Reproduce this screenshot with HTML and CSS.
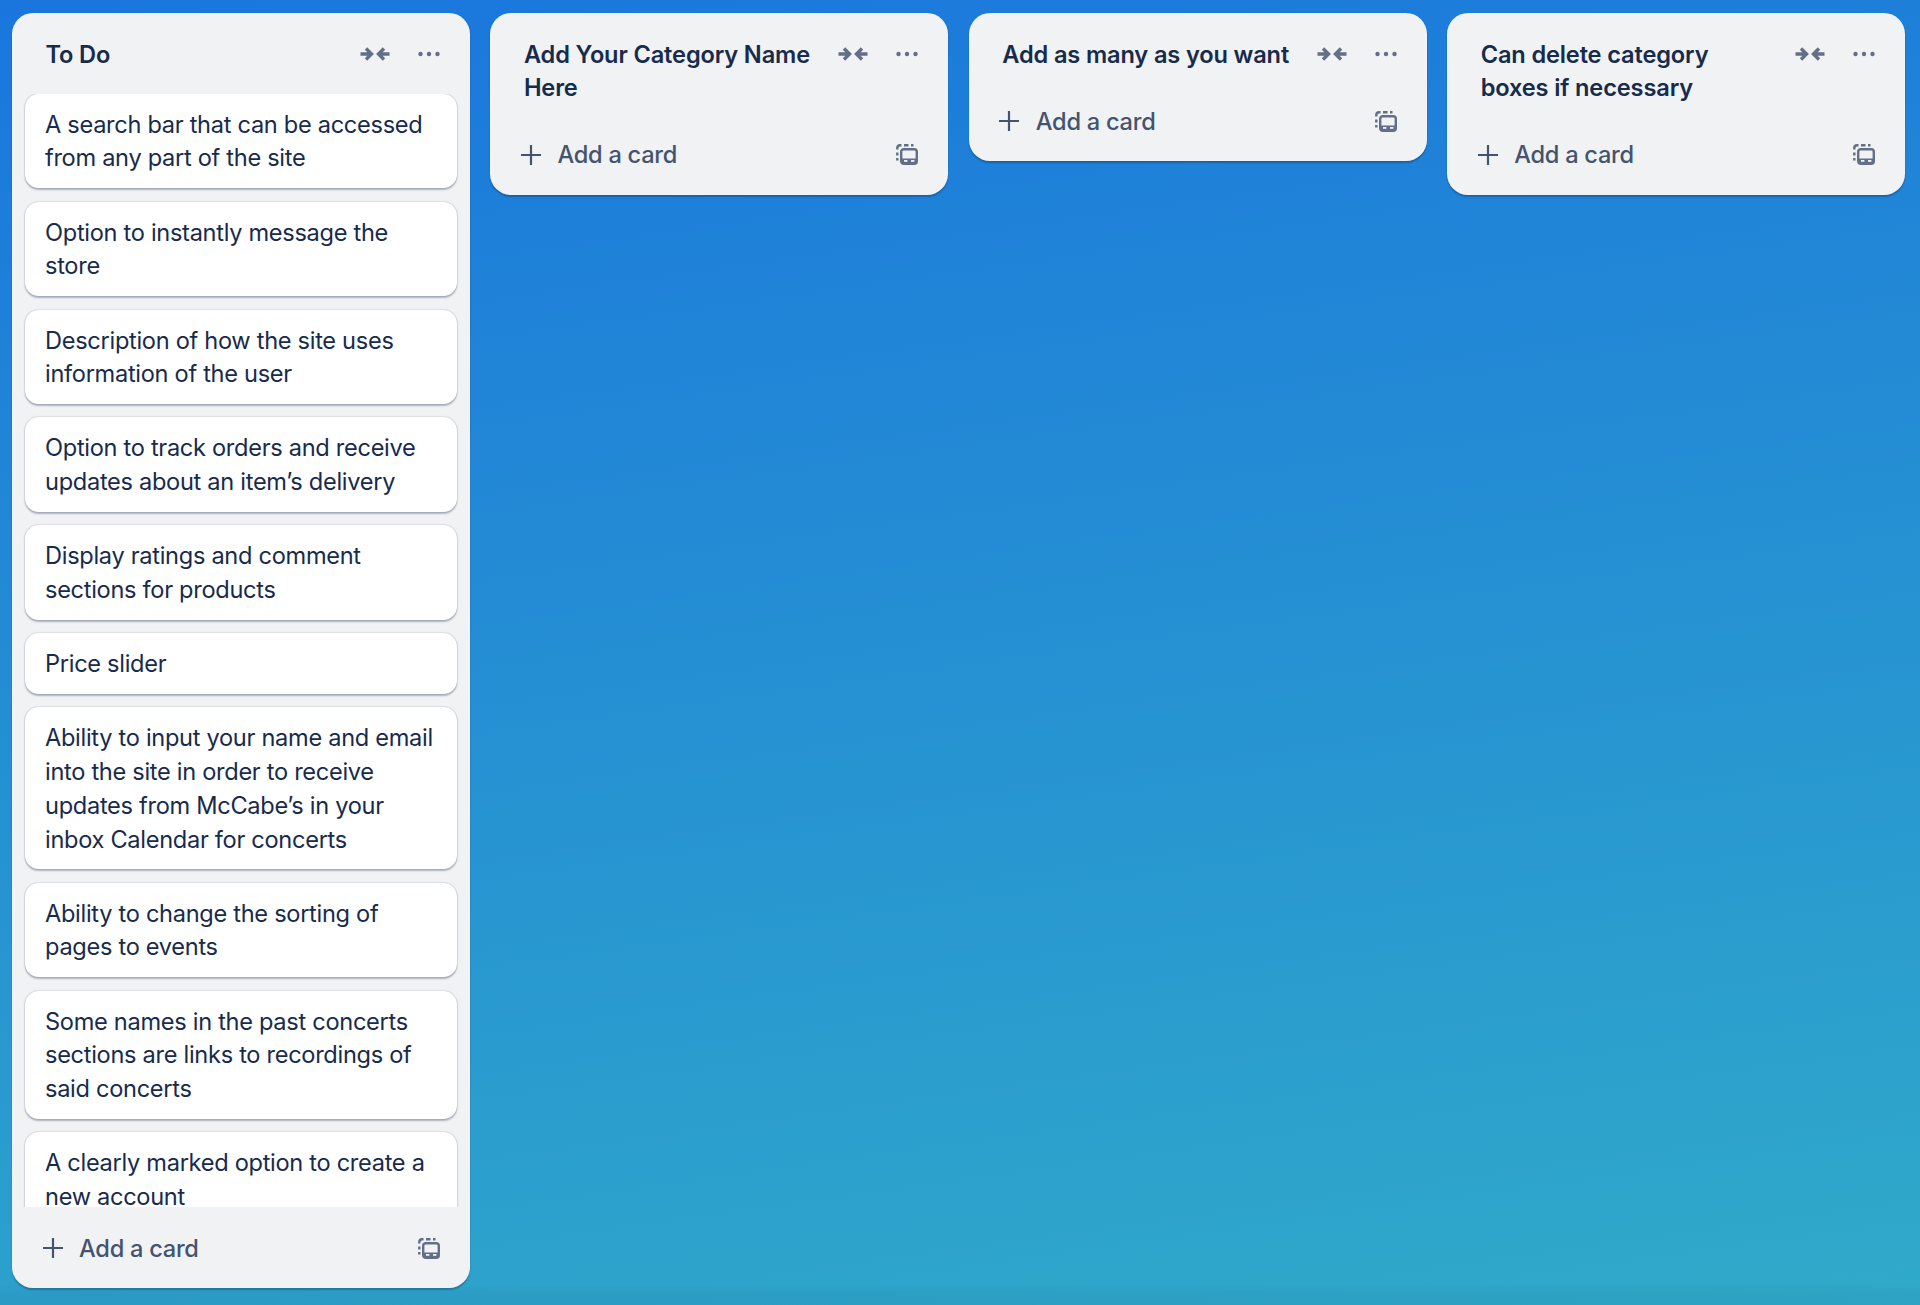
FILE: index.html
```html
<!DOCTYPE html>
<html lang="en">
<head>
<meta charset="utf-8">
<title>Board</title>
<link rel="stylesheet" href="styles.css">
</head>
<body>
<svg class="sprite" width="0" height="0" aria-hidden="true">
  <symbol id="i-collapse" viewBox="0 0 30 14">
    <path d="M.5 7h11M6 1.500 11.500 7 6 12.500M29.500 7h-11M24 1.500 18.500 7 24 12.500" fill="none" stroke="currentColor" stroke-width="3.400"/>
  </symbol>
  <symbol id="i-dots" viewBox="0 0 22 6">
    <circle cx="2.500" cy="3" r="2.200" fill="currentColor"/><circle cx="11" cy="3" r="2.200" fill="currentColor"/><circle cx="19.500" cy="3" r="2.200" fill="currentColor"/>
  </symbol>
  <symbol id="i-plus" viewBox="0 0 20 20">
    <path d="M10 0v20M0 10h20" fill="none" stroke="currentColor" stroke-width="2.200"/>
  </symbol>
  <symbol id="i-template" viewBox="0 0 22 21">
    <path d="M1.300 16.500v-2.500M1.300 11.500v-3M1.300 5.500V4A2.800 2.800 0 0 1 4 1.300h1.500M8 1.300h4.500M15 1.300h2.500" fill="none" stroke="currentColor" stroke-width="2.400"/>
    <rect x="5.200" y="5.200" width="15.600" height="14.600" rx="2.600" fill="none" stroke="currentColor" stroke-width="2.400"/>
    <path d="M5.500 14.500h15v3a2 2 0 0 1-2 2h-11a2 2 0 0 1-2-2z" fill="currentColor"/>
    <rect x="8" y="16" width="3.400" height="1.800" fill="#f1f2f4"/><rect x="15" y="16" width="3.400" height="1.800" fill="#f1f2f4"/>
  </symbol>
</svg>
<main class="board">
  <section class="column">
    <header class="column-head">
      <h2 class="column-title">To Do</h2>
      <svg class="icon-collapse"><use href="#i-collapse"/></svg>
      <svg class="icon-dots"><use href="#i-dots"/></svg>
    </header>
    <div class="card-list">
      <article class="card">A search bar that can be accessed from any part of the site</article>
      <article class="card">Option to instantly message the store</article>
      <article class="card">Description of how the site uses information of the user</article>
      <article class="card">Option to track orders and receive updates about an item’s delivery</article>
      <article class="card">Display ratings and comment sections for products</article>
      <article class="card">Price slider</article>
      <article class="card">Ability to input your name and email into the site in order to receive updates from McCabe’s in your inbox Calendar for concerts</article>
      <article class="card">Ability to change the sorting of pages to events</article>
      <article class="card">Some names in the past concerts sections are links to recordings of said concerts</article>
      <article class="card">A clearly marked option to create a new account</article>
    </div>
    <footer class="column-foot">
      <svg class="icon-plus"><use href="#i-plus"/></svg>
      <span class="add-label">Add a card</span>
      <svg class="icon-template"><use href="#i-template"/></svg>
    </footer>
  </section>
  <section class="column">
    <header class="column-head">
      <h2 class="column-title">Add Your Category Name Here</h2>
      <svg class="icon-collapse"><use href="#i-collapse"/></svg>
      <svg class="icon-dots"><use href="#i-dots"/></svg>
    </header>
    <footer class="column-foot">
      <svg class="icon-plus"><use href="#i-plus"/></svg>
      <span class="add-label">Add a card</span>
      <svg class="icon-template"><use href="#i-template"/></svg>
    </footer>
  </section>
  <section class="column">
    <header class="column-head">
      <h2 class="column-title">Add as many as you want</h2>
      <svg class="icon-collapse"><use href="#i-collapse"/></svg>
      <svg class="icon-dots"><use href="#i-dots"/></svg>
    </header>
    <footer class="column-foot">
      <svg class="icon-plus"><use href="#i-plus"/></svg>
      <span class="add-label">Add a card</span>
      <svg class="icon-template"><use href="#i-template"/></svg>
    </footer>
  </section>
  <section class="column">
    <header class="column-head">
      <h2 class="column-title">Can delete category boxes if necessary</h2>
      <svg class="icon-collapse"><use href="#i-collapse"/></svg>
      <svg class="icon-dots"><use href="#i-dots"/></svg>
    </header>
    <footer class="column-foot">
      <svg class="icon-plus"><use href="#i-plus"/></svg>
      <span class="add-label">Add a card</span>
      <svg class="icon-template"><use href="#i-template"/></svg>
    </footer>
  </section>
</main>
</body>
</html>
```
FILE: styles.css
```css
* { box-sizing: border-box; }
html, body { height: 100%; margin: 0; }
body {
  overflow: hidden;
  font-family: Inter, "Liberation Sans", sans-serif;
  color: #172b4d;
  background:
    linear-gradient(to bottom, rgba(9, 30, 66, 0) calc(100% - 22px), rgba(9, 30, 66, .05) calc(100% - 10px)),
    linear-gradient(172deg, #1a76dd 0%, #30aac9 100%);
}
.sprite { position: absolute; }
.board {
  height: 100%;
  display: flex;
  align-items: flex-start;
  gap: 20.400px;
  padding: 13px 12px 17px;
}
.column {
  flex: 0 0 458px;
  max-height: 100%;
  display: flex;
  flex-direction: column;
  background: #f1f2f4;
  border-radius: 21px;
  box-shadow: 0 1.500px 1.500px rgba(9, 30, 66, .3);
}
.column-head {
  flex: none;
  display: flex;
  align-items: flex-start;
  padding: 24.500px 30px 22.500px 33.500px;
}
.column-title {
  flex: 1;
  min-width: 0;
  max-width: 301px;
  margin: 0;
  font-size: 23.600px;
  line-height: 33.700px;
  font-weight: 600;
  letter-spacing: -.14px;
  color: #172b4d;
}
.icon-collapse {
  flex: none;
  width: 30px;
  height: 14px;
  margin: 9.500px 28px 0 auto;
  color: #626f86;
}
.icon-dots {
  flex: none;
  width: 22px;
  height: 6px;
  margin-top: 13.500px;
  color: #626f86;
}
.card-list {
  flex: 1;
  min-height: 0;
  overflow: hidden;
  display: flex;
  flex-direction: column;
  gap: 13.500px;
  margin-bottom: 13.500px;
  padding: 0 13px;
}
.card {
  flex: none;
  padding: 14px 20px 13px;
  background: #fff;
  border-radius: 13.500px;
  font-size: 23.600px;
  line-height: 33.700px;
  letter-spacing: -.3px;
  color: #172b4d;
  box-shadow: 0 1.700px 1.700px rgba(9, 30, 66, .28), 0 0 1.700px rgba(9, 30, 66, .3);
}
.column-foot {
  flex: none;
  height: 54px;
  margin-bottom: 13.500px;
  display: flex;
  align-items: center;
  padding: 1px 30px 0 30.500px;
}
.icon-plus {
  flex: none;
  width: 20px;
  height: 20px;
  color: #44546f;
}
.add-label {
  flex: 1;
  margin-left: 16.500px;
  font-size: 23.600px;
  font-weight: 500;
  letter-spacing: -.25px;
  color: #44546f;
}
.icon-template {
  flex: none;
  width: 22px;
  height: 21px;
  color: #626f86;
}
```
